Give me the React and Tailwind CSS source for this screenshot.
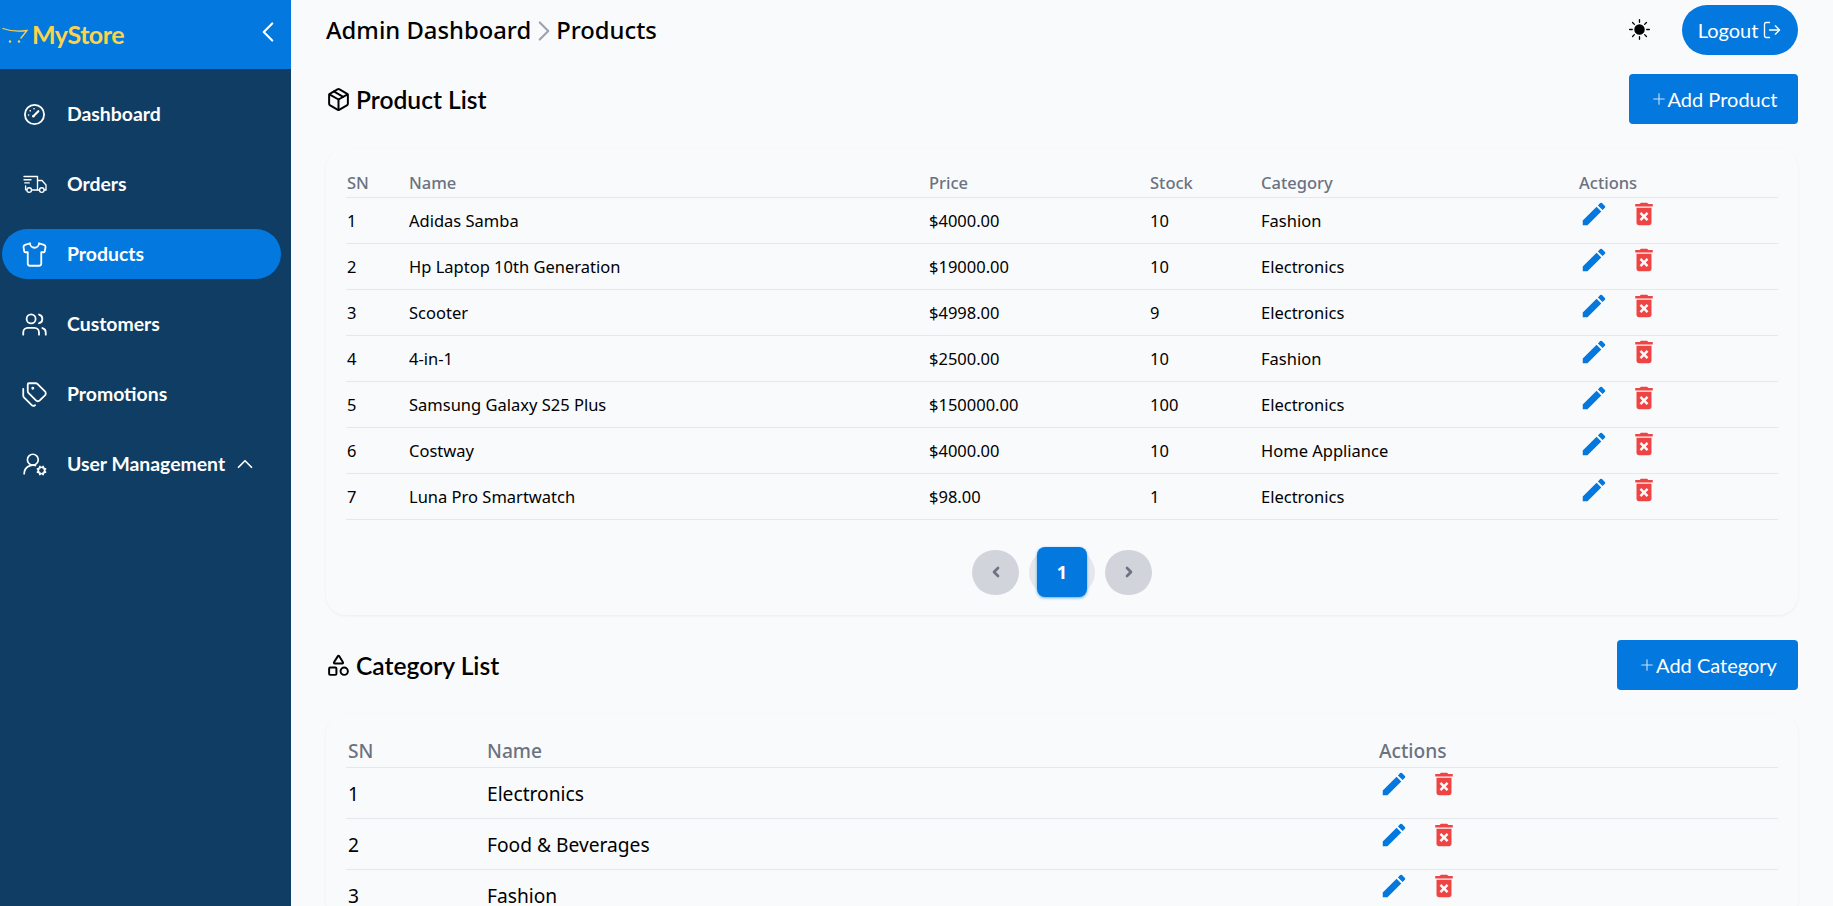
import React from "react";
import { ChevronLeft, ChevronRight, ChevronUp, Plus, Shirt, Users, Tags, UserRoundCog, Package, Shapes, LogOut } from "lucide-react";
import { MdEdit, MdDeleteForever } from "react-icons/md";
import { BsSunFill } from "react-icons/bs";

function GaugeIcon({ className }) {
  return (
    <svg className={className} viewBox="0 0 24 24" fill="none" stroke="currentColor" strokeWidth="1.9" strokeLinecap="round">
      <circle cx="12" cy="12" r="10" />
      <path d="M11 13.5 16 8.5" strokeWidth="2.2" />
      <circle cx="10.8" cy="13.7" r="1.3" fill="currentColor" stroke="none" />
      <path d="M5.8 12.5h.1M7.5 8.2h.1M11.5 6h.1" strokeWidth="1.7" />
    </svg>
  );
}
function TruckIcon({ className }) {
  return (
    <svg className={className} viewBox="0 0 24 18" fill="none" stroke="currentColor" strokeWidth="1.35" strokeLinecap="round" strokeLinejoin="round">
      <path d="M1 1.5h13.5V15H9.2" />
      <path d="M1 4.7h7M1.8 7.9h4.4M2.6 11v3.8h.8" />
      <path d="M14.5 5.5h4.5l4 4.5v5h-1.6" />
      <path d="M16.2 15h-1.7" />
      <circle cx="6.2" cy="15" r="2.3" />
      <circle cx="18.8" cy="15" r="2.3" />
    </svg>
  );
}

const nav = [
  ["Dashboard", GaugeIcon, "w-[23px] h-[23px]"],
  ["Orders", TruckIcon, "w-[24px] h-[18px]"],
  ["Products", Shirt, "w-[27px] h-[27px]"],
  ["Customers", Users, "w-[27px] h-[27px]"],
  ["Promotions", Tags, "w-[27px] h-[27px]"],
  ["User Management", UserRoundCog, "w-[26px] h-[26px]"],
];
const products = [
  ["1", "Adidas Samba", "$4000.00", "10", "Fashion"],
  ["2", "Hp Laptop 10th Generation", "$19000.00", "10", "Electronics"],
  ["3", "Scooter", "$4998.00", "9", "Electronics"],
  ["4", "4-in-1", "$2500.00", "10", "Fashion"],
  ["5", "Samsung Galaxy S25 Plus", "$150000.00", "100", "Electronics"],
  ["6", "Costway", "$4000.00", "10", "Home Appliance"],
  ["7", "Luna Pro Smartwatch", "$98.00", "1", "Electronics"],
];
const categories = [["1", "Electronics"], ["2", "Food & Beverages"], ["3", "Fashion"]];

function Actions({ gap }) {
  return (
    <div className={`flex items-start ${gap}`}>
      <MdEdit className="w-[30px] h-[30px] text-[#0378de] shrink-0" />
      <MdDeleteForever className="w-[30px] h-[30px] text-[#ef4444] shrink-0" />
    </div>
  );
}

function SectionHead({ Icon, title, button, btnW }) {
  return (
    <div className="flex items-center justify-between h-[50px]">
      <div className="flex items-center gap-[5px]">
        <Icon className="w-[25px] h-[25px] text-black" strokeWidth={1.9} />
        <h2 className="text-[24.6px] font-semibold text-black leading-none pt-[2px]">{title}</h2>
      </div>
      <button className={`${btnW} h-[50px] rounded-[4px] bg-[#0378de] text-white text-[20px] flex items-center justify-center`}>
        <Plus className="w-[18px] h-[18px] text-[#c5e0f8]" strokeWidth={1.5} />
        {button}
      </button>
    </div>
  );
}

export default function App() {
  return (
    <div className="flex h-[906px] w-[1833px] overflow-hidden bg-[#f9fafc] font-['Lato','Noto_Sans',sans-serif]">
      <aside className="w-[291px] shrink-0 bg-[#0f3d63] text-white">
        <div className="h-[69px] bg-[#0378de] flex items-center justify-between pl-[2px] pr-[6px]">
          <div className="flex items-center gap-[4px]">
            <svg width="26" height="18" viewBox="0 0 26 18" fill="none">
              <path d="M1 2.5C8 5 17 5.5 25 4.5L19 12" stroke="#fcd34d" strokeWidth="1.3" strokeLinecap="round" />
              <circle cx="8" cy="15.5" r="1.2" fill="#fcd34d" />
              <circle cx="17" cy="15.5" r="1.2" fill="#fcd34d" />
            </svg>
            <span className="text-[25px] font-bold text-[#fcd34d] tracking-[-0.5px]">MyStore</span>
          </div>
          <ChevronLeft className="w-[34px] h-[34px] mb-[5px]" strokeWidth={1.5} />
        </div>
        <nav className="pt-[20px] pl-[2px] pr-[10px] flex flex-col gap-[20px]">
          {nav.map(([label, Icon, size]) => {
            const active = label === "Products";
            return (
              <div key={label} className={`h-[50px] flex items-center rounded-full ${active ? "bg-[#0378de]" : ""}`}>
                <div className="w-[65px] flex justify-center shrink-0">
                  <Icon className={size} strokeWidth={1.6} />
                </div>
                <span className="text-[19.4px] font-bold">{label}</span>
                {label === "User Management" && <ChevronUp className="w-[26px] h-[26px] ml-[7px]" strokeWidth={1.6} />}
              </div>
            );
          })}
        </nav>
      </aside>

      <main className="flex-1 min-w-0 pl-[35px] pr-[35px]">
        <header className="h-[59px] flex items-center justify-between">
          <div className="flex items-center pt-[3px] text-[23.8px] font-['Noto_Sans',sans-serif] font-medium text-black">
            <span>Admin Dashboard</span>
            <ChevronRight className="w-[34px] h-[34px] -mx-[4.5px] text-[#9ca3af]" strokeWidth={1.5} />
            <span>Products</span>
          </div>
          <div className="flex items-center gap-[32px]">
            <BsSunFill className="w-[21px] h-[21px] text-black" />
            <button className="w-[116px] h-[50px] rounded-full bg-[#0378de] text-white text-[20px] flex items-center justify-center gap-[4px]">
              Logout <LogOut className="w-[20px] h-[20px]" strokeWidth={1.6} />
            </button>
          </div>
        </header>

        <div className="mt-[15px]">
          <SectionHead Icon={Package} title="Product List" button="Add Product" btnW="w-[169px]" />
        </div>

        <section className="mt-[24px] h-[467px] rounded-[20px] shadow-[0_1px_3px_rgba(0,0,0,0.06)] px-[20px] pt-[16px] font-['Noto_Sans',sans-serif]">
          <table className="w-[1432px] table-fixed text-left text-[16.5px] text-black">
            <thead>
              <tr className="h-[33px] border-b border-[#e5e7eb] text-[#6b7280]">
                <th className="w-[63px] pl-[1px] pb-[1px] align-bottom font-medium">SN</th>
                <th className="w-[520px] pb-[1px] align-bottom font-medium">Name</th>
                <th className="w-[221px] pb-[1px] align-bottom font-medium">Price</th>
                <th className="w-[111px] pb-[1px] align-bottom font-medium">Stock</th>
                <th className="w-[318px] pb-[1px] align-bottom font-medium">Category</th>
                <th className="pb-[1px] align-bottom font-medium">Actions</th>
              </tr>
            </thead>
            <tbody>
              {products.map((r) => (
                <tr key={r[0]} className="h-[46px] border-b border-[#e5e7eb]">
                  <td className="pl-[1px] pt-[2px]">{r[0]}</td>
                  <td className="pt-[2px]">{r[1]}</td>
                  <td className="pt-[2px]">{r[2]}</td>
                  <td className="pt-[2px]">{r[3]}</td>
                  <td className="pt-[2px]">{r[4]}</td>
                  <td className="align-top pt-[1px]"><Actions gap="gap-[20px]" /></td>
                </tr>
              ))}
            </tbody>
          </table>
          <div className="mt-[30px] flex items-center justify-center gap-[10px]">
            <div className="w-[47px] h-[45px] rounded-full bg-[#d1d5db] flex items-center justify-center text-[#6b7280]">
              <ChevronLeft className="w-[16px] h-[16px]" strokeWidth={4} />
            </div>
            <div className="relative w-[66px] h-[45px] rounded-full bg-[#e5e7eb] flex items-center justify-center">
              <div className="w-[50px] h-[50px] rounded-[8px] bg-[#0378de] text-white font-bold text-[18px] flex items-center justify-center shadow-[0_1px_3px_rgba(3,120,222,0.6)]">1</div>
            </div>
            <div className="w-[47px] h-[45px] rounded-full bg-[#d1d5db] flex items-center justify-center text-[#6b7280]">
              <ChevronRight className="w-[16px] h-[16px]" strokeWidth={4} />
            </div>
          </div>
        </section>

        <div className="mt-[25px]">
          <SectionHead Icon={Shapes} title="Category List" button="Add Category" btnW="w-[181px]" />
        </div>

        <section className="mt-[24px] rounded-[20px] shadow-[0_1px_3px_rgba(0,0,0,0.06)] px-[20px] pt-[19px] font-['Noto_Sans',sans-serif]">
          <table className="w-[1432px] table-fixed text-left text-[19.2px] text-black">
            <thead>
              <tr className="h-[34px] border-b border-[#e5e7eb] text-[#6b7280]">
                <th className="w-[141px] pl-[2px] pb-[1px] align-bottom font-medium">SN</th>
                <th className="w-[892px] pb-[1px] align-bottom font-medium">Name</th>
                <th className="pb-[1px] align-bottom font-medium">Actions</th>
              </tr>
            </thead>
            <tbody>
              {categories.map((r) => (
                <tr key={r[0]} className="h-[51px] border-b border-[#e5e7eb]">
                  <td className="pl-[2px] pt-[3px]">{r[0]}</td>
                  <td className="pt-[3px]">{r[1]}</td>
                  <td className="align-top pt-[1px]"><Actions gap="gap-[20px]" /></td>
                </tr>
              ))}
            </tbody>
          </table>
        </section>
      </main>
    </div>
  );
}
